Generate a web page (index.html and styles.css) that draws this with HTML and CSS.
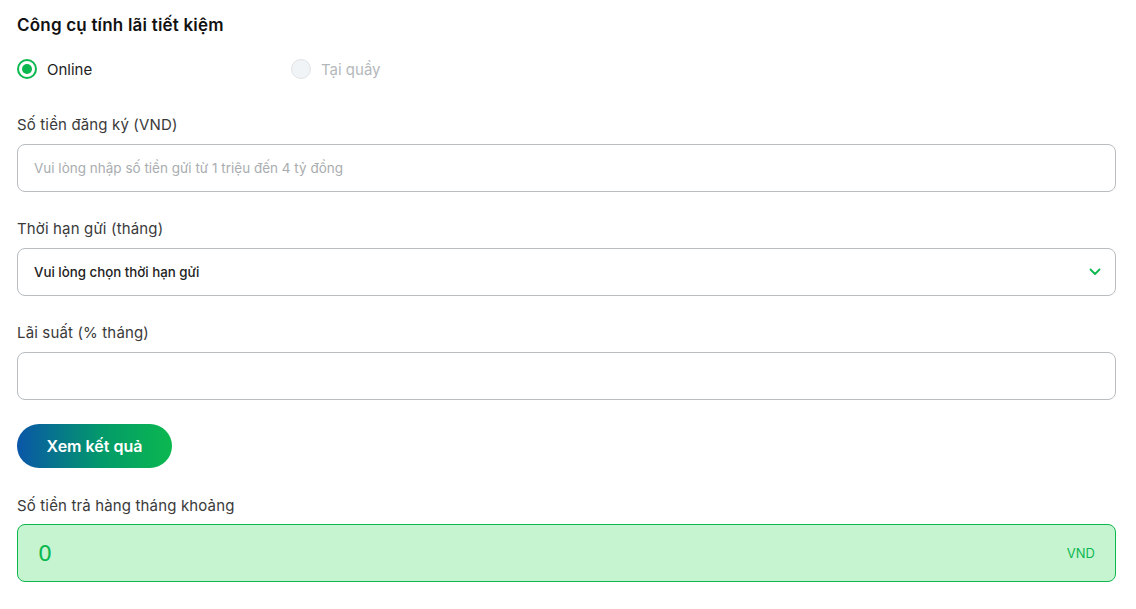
FILE: index.html
```html
<!DOCTYPE html>
<html lang="vi">
<head>
  <meta charset="UTF-8" />
  <meta name="viewport" content="width=device-width, initial-scale=1.0"/>
  <title>Công cụ tính lãi tiết kiệm</title>
  <link rel="stylesheet" href="styles.css">
</head>
<body>
  <div class="calculator">
    <h2 class="title">Công cụ tính lãi tiết kiệm</h2>

    <div class="modes">
      <label class="radio active"><span class="dot"></span>Online</label>
      <label class="radio disabled"><span class="dot"></span>Tại quầy</label>
    </div>

    <div class="field">
      <div class="label">Số tiền đăng ký (VND)</div>
      <div class="box"><span class="placeholder">Vui lòng nhập số tiền gửi từ 1 triệu đến 4 tỷ đồng</span></div>
    </div>

    <div class="field">
      <div class="label">Thời hạn gửi (tháng)</div>
      <div class="box select">
        <span class="value">Vui lòng chọn thời hạn gửi</span>
        <svg class="chevron" width="12" height="8" viewBox="0 0 12 8">
          <path d="M1.5 1.5 L6 6 L10.5 1.5" fill="none" stroke="#0bb84f" stroke-width="1.8" stroke-linecap="round" stroke-linejoin="round"/>
        </svg>
      </div>
    </div>

    <div class="field">
      <div class="label">Lãi suất (% tháng)</div>
      <div class="box"></div>
    </div>

    <button class="submit">Xem kết quả</button>

    <div class="field result-field">
      <div class="label">Số tiền trả hàng tháng khoảng</div>
      <div class="result">
        <span class="amount">0</span>
        <span class="unit">VND</span>
      </div>
    </div>
  </div>
</body>
</html>
```

FILE: styles.css
```css
* {
  box-sizing: border-box;
}

body {
  margin: 0;
  font-family: 'Inter', 'Noto Sans', sans-serif;
  background: #ffffff;
  color: #1d1d1d;
}

.calculator {
  width: 1099px;
  margin-left: 17px;
  padding-top: 14px;
}

.title {
  margin: 0;
  font-size: 17px;
  font-weight: 600;
  line-height: 22px;
  color: #111;
  letter-spacing: 0.2px;
}

.modes {
  display: flex;
  margin-top: 22px;
  height: 22px;
  align-items: center;
}

.radio {
  display: flex;
  align-items: center;
  gap: 10px;
  font-size: 15px;
  width: 274px;
}

.dot {
  width: 20px;
  height: 20px;
  border-radius: 50%;
  border: 2px solid #0bb84f;
  display: flex;
  align-items: center;
  justify-content: center;
}

.radio.active .dot::after {
  content: '';
  width: 10px;
  height: 10px;
  border-radius: 50%;
  background: #0bb84f;
}

.radio.disabled {
  color: #b4b8bb;
}

.radio.disabled .dot {
  border: 1.5px solid #dfe3e6;
  background: #f1f4f6;
}

.field {
  margin-top: 27px;
}

.modes + .field {
  margin-top: 35px;
}

.label {
  font-size: 15px;
  line-height: 20px;
  color: #3a3a3a;
  margin-bottom: 9px;
  letter-spacing: 0.15px;
}

.box {
  height: 48px;
  border: 1px solid #b9bdbf;
  border-radius: 8px;
  display: flex;
  align-items: center;
  padding: 0 16px;
}

.placeholder {
  font-size: 13.5px;
  color: #a9adb0;
}

.select {
  justify-content: space-between;
  padding-right: 14px;
}

.select .value {
  font-size: 13.3px;
  font-weight: 500;
  color: #222;
}

.submit {
  margin-top: 24px;
  width: 155px;
  height: 44px;
  border: none;
  border-radius: 22px;
  background: linear-gradient(90deg, #0a56a8 0%, #039a6a 55%, #0bb84f 100%);
  color: #ffffff;
  font-family: inherit;
  font-size: 16px;
  font-weight: 600;
  cursor: pointer;
}

.result-field {
  margin-top: 28px;
}

.result-field .label {
  margin-bottom: 8px;
}

.result {
  height: 58px;
  background: #c6f4d1;
  border: 1px solid #0fb64e;
  border-radius: 8px;
  display: flex;
  align-items: center;
  justify-content: space-between;
  padding: 0 20px;
}

.amount {
  font-family: 'DejaVu Sans', sans-serif;
  font-size: 22px;
  color: #0bb84f;
}

.unit {
  font-size: 13px;
  color: #0bb84f;
}
```
